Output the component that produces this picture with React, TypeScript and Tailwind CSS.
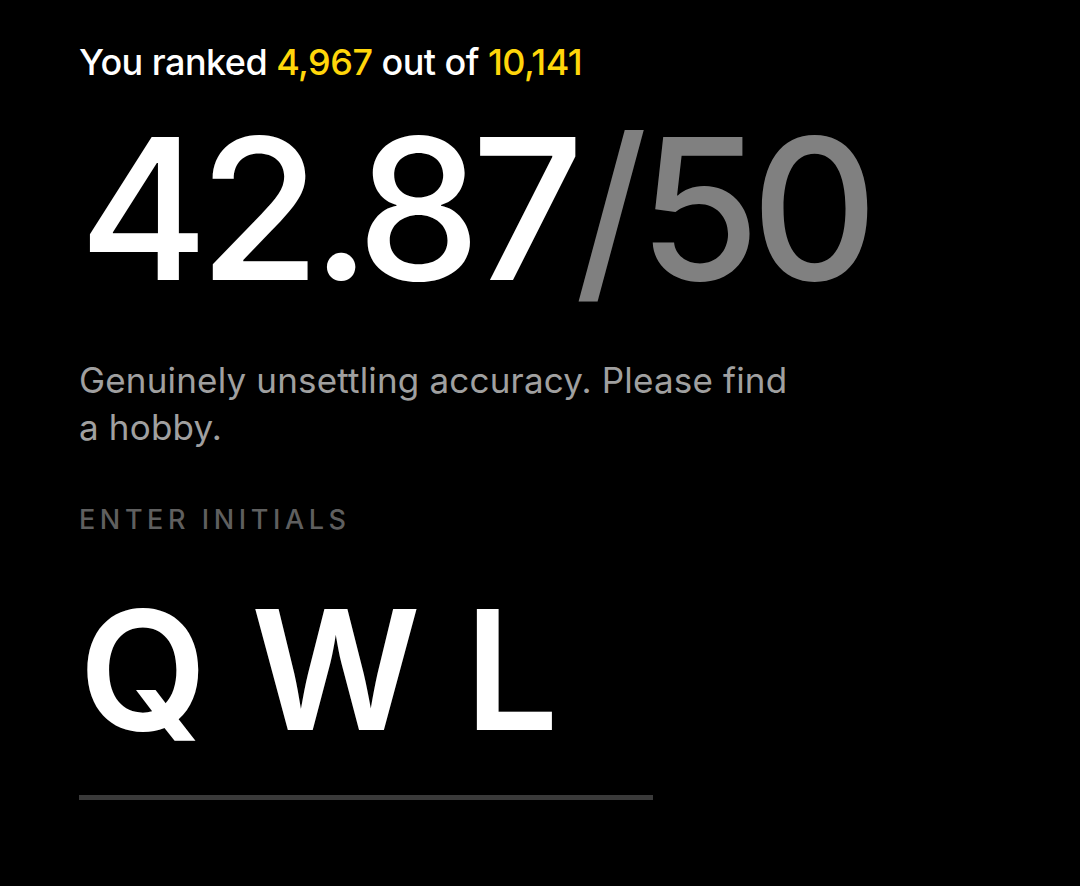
const App = () => {
  return (
    <div
      className="min-h-[886px] w-full bg-black px-[79px] pt-[36px] text-white"
      style={{ fontFamily: 'Inter, "Noto Sans", sans-serif' }}
    >
      <p className="text-[36px] font-medium leading-[52px] tracking-[-0.015em]">
        You ranked <span className="text-[#ffd60a]">4,967</span> out of{' '}
        <span className="text-[#ffd60a]">10,141</span>
      </p>

      <div className="mt-[21px] flex items-baseline text-[197px] font-medium leading-[200px] tracking-[-0.047em]">
        <span>42.87</span>
        <span className="text-[#808080]">/50</span>
      </div>

      <p className="mt-[48px] max-w-[740px] text-[35px] leading-[47px] tracking-[0.005em] text-[#a0a0a0]">
        Genuinely unsettling accuracy. Please find
        <br />a hobby.
      </p>

      <p className="mt-[54px] text-[27px] font-medium leading-[30px] tracking-[0.17em] text-[#5f5f5f]">
        ENTER INITIALS
      </p>

      <div className="mt-[60px] flex w-[574px] gap-[44px] border-b-[5px] border-[#3a3a3a] pb-[50px] text-[166px] font-semibold leading-[150px]">
        <span>Q</span>
        <span>W</span>
        <span>L</span>
      </div>
    </div>
  );
};

export default App;
